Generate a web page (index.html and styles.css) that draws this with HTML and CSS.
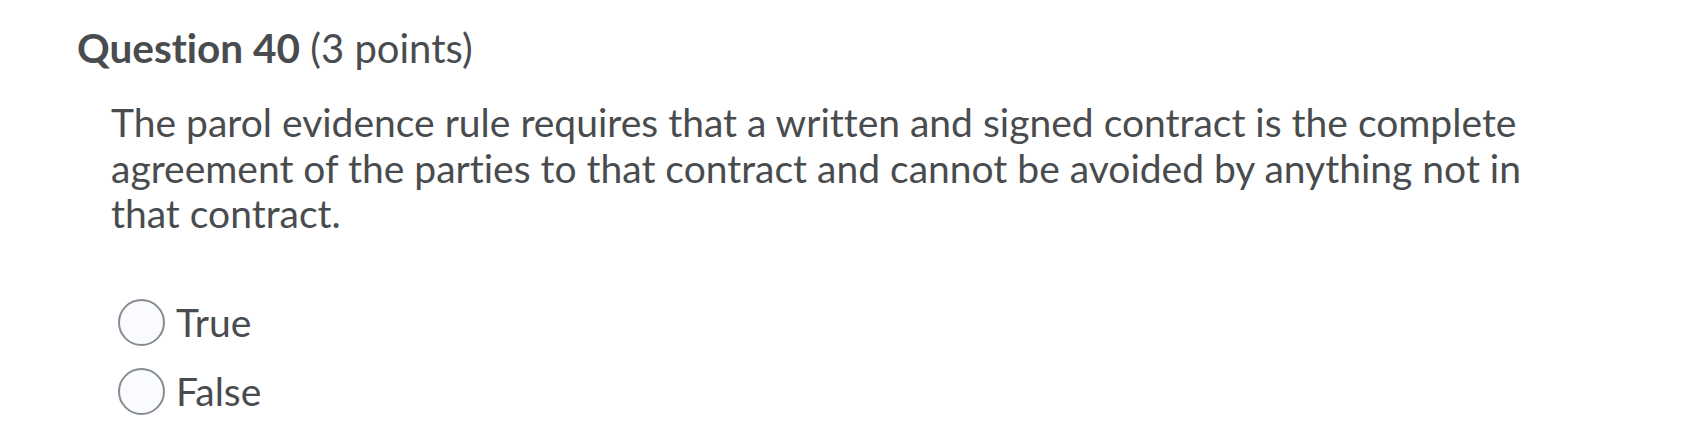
FILE: index.html
```html
<!DOCTYPE html>
<html lang="en">
<head>
<meta charset="utf-8">
<title>Question 40</title>
<link rel="stylesheet" href="styles.css">
</head>
<body>
<div class="question">
  <h2 class="q-title"><strong>Question 40</strong> <span class="q-points">(3 points)</span></h2>
  <p class="q-stem">The parol evidence rule requires that a written and signed contract is the complete agreement of the parties to that contract and cannot be avoided by anything not in that contract.</p>
  <div class="q-options">
    <label class="q-option"><span class="radio"></span><span class="opt-text">True</span></label>
    <label class="q-option"><span class="radio"></span><span class="opt-text">False</span></label>
  </div>
</div>
</body>
</html>
```
FILE: styles.css
```css
html, body {
  margin: 0;
  padding: 0;
  background: #ffffff;
}
body {
  font-family: Lato, "Noto Sans", sans-serif;
  color: #494c4e;
  font-variant-ligatures: none;
  font-feature-settings: "liga" 0, "clig" 0;
}
.question {
  padding: 24px 0 0 77px;
}
.q-title {
  margin: 0;
  font-size: 40px;
  line-height: 48px;
  font-weight: 400;
}
.q-title strong {
  font-weight: 700;
  font-size: 40.5px;
}
.q-stem {
  margin: 28px 0 0 34px;
  font-size: 39px;
  line-height: 45.5px;
  max-width: 1460px;
}
.q-options {
  margin: 62px 0 0 41px;
  display: flex;
  flex-direction: column;
  gap: 22px;
}
.q-option {
  display: flex;
  align-items: center;
  gap: 11px;
  font-size: 39px;
  line-height: 46px;
}
.radio {
  width: 43px;
  height: 43px;
  border: 2px solid #868c8f;
  border-radius: 50%;
  background: #f9fbff;
  flex: none;
}
```
